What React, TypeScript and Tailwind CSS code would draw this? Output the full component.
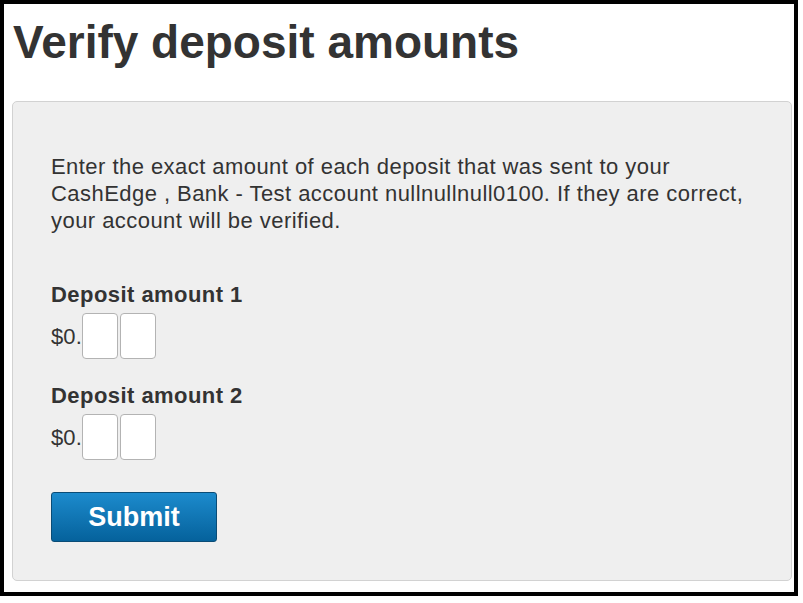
import React from "react";

function AmountRow() {
  return (
    <div className="flex items-center mt-[5px] h-[46px]">
      <span className="text-[22px] leading-[27px] tracking-[0.1px] text-[#333]">$0.</span>
      <input
        type="text"
        aria-label="cents tens"
        className="w-[36px] h-[46px] bg-white border border-[#b3b3b3] rounded-[4px] outline-none"
      />
      <input
        type="text"
        aria-label="cents ones"
        className="ml-[2px] w-[36px] h-[46px] bg-white border border-[#b3b3b3] rounded-[4px] outline-none"
      />
    </div>
  );
}

export default function App() {
  return (
    <div
      className="w-[803px] h-[603px] bg-white"
      style={{ fontFamily: '"Liberation Sans", Arial, Helvetica, sans-serif' }}
    >
      <div className="w-[798px] h-[596px] border-4 border-black bg-white flex flex-col">
        <h1 className="mt-[15px] ml-[9px] text-[46px] leading-[46px] font-bold text-[#333]">
          Verify deposit amounts
        </h1>
        <div className="mt-[36px] ml-[8px] w-[780px] h-[480px] bg-[#efefef] border border-[#d2d2d2] rounded-[5px] pl-[38px] pt-[51px]">
          <p className="text-[22px] leading-[27px] tracking-[0.45px] text-[#333] w-[700px]">
            Enter the exact amount of each deposit that was sent to your CashEdge , Bank - Test account nullnullnull0100. If they are correct, your account will be verified.
          </p>
          <div className="mt-[47px] text-[22px] leading-[27px] font-bold tracking-[0.45px] text-[#333]">
            Deposit amount 1
          </div>
          <AmountRow />
          <div className="mt-[23px] text-[22px] leading-[27px] font-bold tracking-[0.45px] text-[#333]">
            Deposit amount 2
          </div>
          <AmountRow />
          <button
            type="button"
            className="mt-[32px] w-[166px] h-[50px] rounded-[3px] border border-[#0a4c76] bg-gradient-to-b from-[#1c8bcd] to-[#05629c] text-white text-[27px] font-bold leading-none"
          >
            Submit
          </button>
        </div>
      </div>
    </div>
  );
}
